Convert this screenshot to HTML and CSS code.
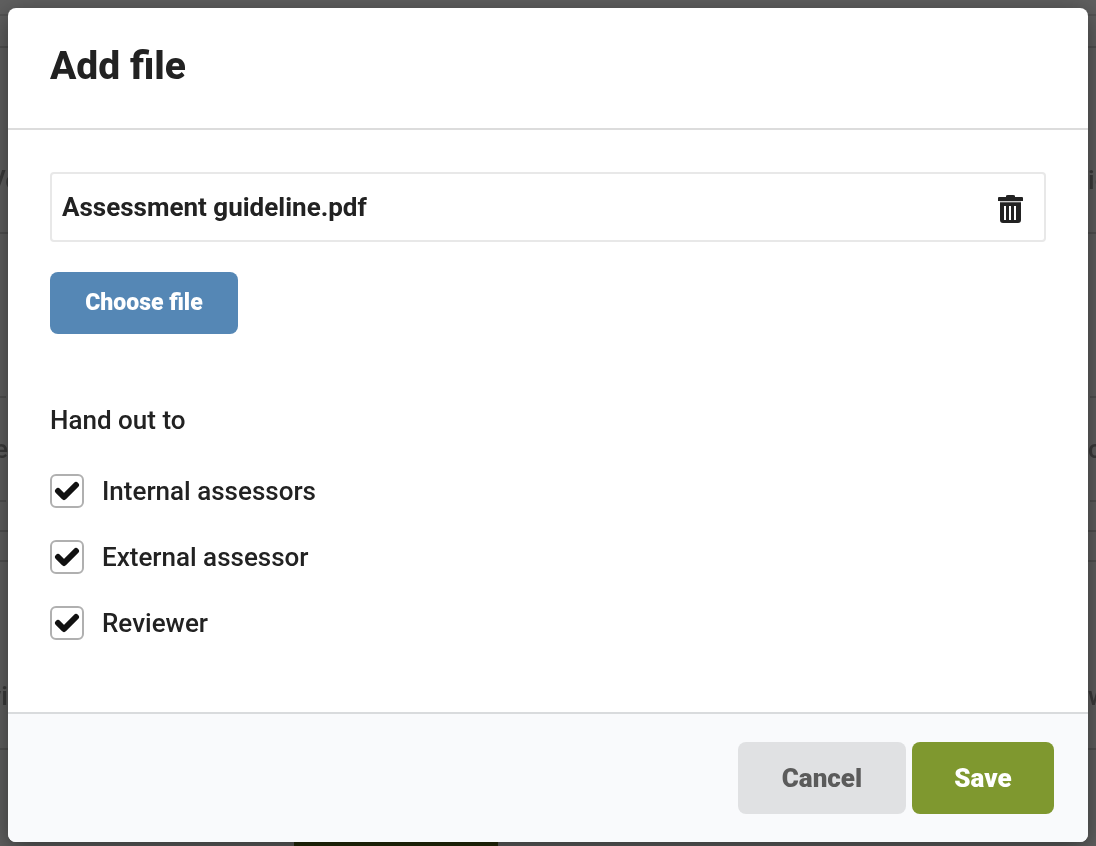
FILE: index.html
```
<!DOCTYPE html>
<html lang="en">
<head>
<meta charset="utf-8">
<title>Add file</title>
<link rel="stylesheet" href="styles.css">
</head>
<body>
<div class="page" aria-hidden="true">
  <div class="page-bar"></div>
  <div class="page-gap"></div>
  <div class="row row-first"><span class="edge edge-middle">Ve</span><span class="edge">ic</span></div>
  <div class="row row-tall"></div>
  <div class="row row-dashed"><span class="edge edge-left">e</span><span class="edge">c</span></div>
  <div class="row row-end"></div>
  <div class="page-gap page-gap-small"></div>
  <div class="row row-last"><span class="edge edge-left">vi</span><span class="edge">w</span></div>
  <div class="row row-foot"><div class="page-action"></div></div>
</div>
<div class="overlay">
  <form class="modal" role="dialog" aria-modal="true" aria-labelledby="title">
    <header class="modal-header"><h1 id="title">Add file</h1></header>
    <div class="modal-body">
      <div class="file">
        <span class="file-name">Assessment guideline.pdf</span>
        <button class="file-delete" type="button" aria-label="Delete file">
          <svg width="26" height="30" viewBox="0 0 26 30"><path fill="#222" d="M8 2Q8 1 10 1H15Q17 1 17 2V3H24Q25 3 25 4V7H0V4Q0 3 1 3H8ZM2 8H23V26Q23 29 20 29H5Q2 29 2 26Z"/><path stroke="#999" d="M2 8H23"/><path stroke="#fff" stroke-width="2" d="M7 12V26M12 12V26M17 12V26"/></svg>
        </button>
      </div>
      <button class="button choose" type="button">Choose file</button>
      <fieldset class="hand-out">
        <legend>Hand out to</legend>
        <label class="option"><span class="box"><input type="checkbox" checked><svg class="tick" viewBox="0 0 26 20"><path d="M4 10L10 16L22 4"/></svg></span>Internal assessors</label>
        <label class="option"><span class="box"><input type="checkbox" checked><svg class="tick" viewBox="0 0 26 20"><path d="M4 10L10 16L22 4"/></svg></span>External assessor</label>
        <label class="option"><span class="box"><input type="checkbox" checked><svg class="tick" viewBox="0 0 26 20"><path d="M4 10L10 16L22 4"/></svg></span>Reviewer</label>
      </fieldset>
    </div>
    <footer class="modal-footer">
      <button class="button cancel" type="button">Cancel</button>
      <button class="button save" type="submit">Save</button>
    </footer>
  </form>
</div>
</body>
</html>
```
FILE: styles.css
```
* { box-sizing: border-box; }
body {
  margin: 0;
  background: #606060;
  color: #222;
  font: 500 26px/32px Roboto, "Noto Sans", sans-serif;
}
button { font: inherit; border: 0; cursor: pointer; }

.page {
  position: fixed;
  inset: 0;
  overflow: hidden;
  color: #3b3b3b;
}
.page-bar { height: 16px; border-bottom: 2px solid #555; }
.page-gap { height: 32px; border-bottom: 2px solid #515151; }
.page-gap-small { height: 30px; }
.row {
  display: flex;
  justify-content: space-between;
  align-items: center;
  border-bottom: 2px solid #515151;
}
.row-first { height: 186px; padding-top: 80px; }
.row-tall { height: 164px; border-bottom-style: dashed; }
.row-dashed { height: 104px; border-bottom-style: dashed; }
.row-end { height: 30px; border-color: #505050; }
.row-last { height: 188px; padding-top: 82px; }
.row-foot { height: 100px; border: 0; align-items: flex-end; }
.edge { display: flex; width: 8px; overflow: hidden; }
.edge-left { justify-content: flex-end; }
.edge-middle { justify-content: center; }
.page-action { width: 204px; height: 40px; margin-left: 294px; background: #252b0a; }

.overlay { position: relative; padding: 8px; }
.modal {
  background: #fff;
  border-radius: 8px;
  box-shadow: 0 6px 24px rgba(0, 0, 0, .45);
}
.modal-header {
  padding: 34px 42px 38px;
  border-bottom: 2px solid #dcdcdc;
}
h1 { margin: 0; font-size: 39px; line-height: 48px; font-weight: 800; }
.modal-body { padding: 42px 42px 72px; }
.file {
  display: flex;
  justify-content: space-between;
  align-items: center;
  height: 70px;
  padding: 0 20px 0 10px;
  border: 2px solid #e8e8e8;
  border-radius: 4px;
}
.file-name { font-weight: 700; }
.file-delete { display: flex; padding: 4px 0 0; background: none; }

.button { border-radius: 8px; font-weight: 900; }
.choose {
  display: block;
  margin-top: 30px;
  width: 188px;
  height: 62px;
  background: #5587b5;
  color: #fff;
  font-size: 23px;
}
.hand-out { margin: 70px 0 0; padding: 0; border: 0; }
legend { padding: 0; margin-bottom: 38px; }
.option { display: flex; align-items: center; gap: 18px; height: 34px; }
.option + .option { margin-top: 32px; }
.box { display: grid; place-items: center; width: 34px; height: 34px; }
.box > * { grid-area: 1 / 1; }
.box input {
  appearance: none;
  width: 34px;
  height: 34px;
  margin: 0;
  border: 2px solid #b0b0b0;
  border-radius: 6px;
}
.tick {
  width: 26px;
  height: 20px;
  fill: none;
  stroke: #111;
  stroke-width: 6;
  stroke-linecap: round;
  stroke-linejoin: round;
  visibility: hidden;
  pointer-events: none;
}
.box input:checked + .tick { visibility: visible; }

.modal-footer {
  display: flex;
  justify-content: flex-end;
  gap: 6px;
  padding: 28px 34px;
  border-top: 2px solid #d9dbdd;
  border-radius: 0 0 8px 8px;
  background: #f9fafc;
}
.cancel, .save { height: 72px; }
.cancel { width: 168px; background: #e0e1e3; color: #5b5b5b; }
.save { width: 142px; background: #7f982f; color: #fff; }
```
